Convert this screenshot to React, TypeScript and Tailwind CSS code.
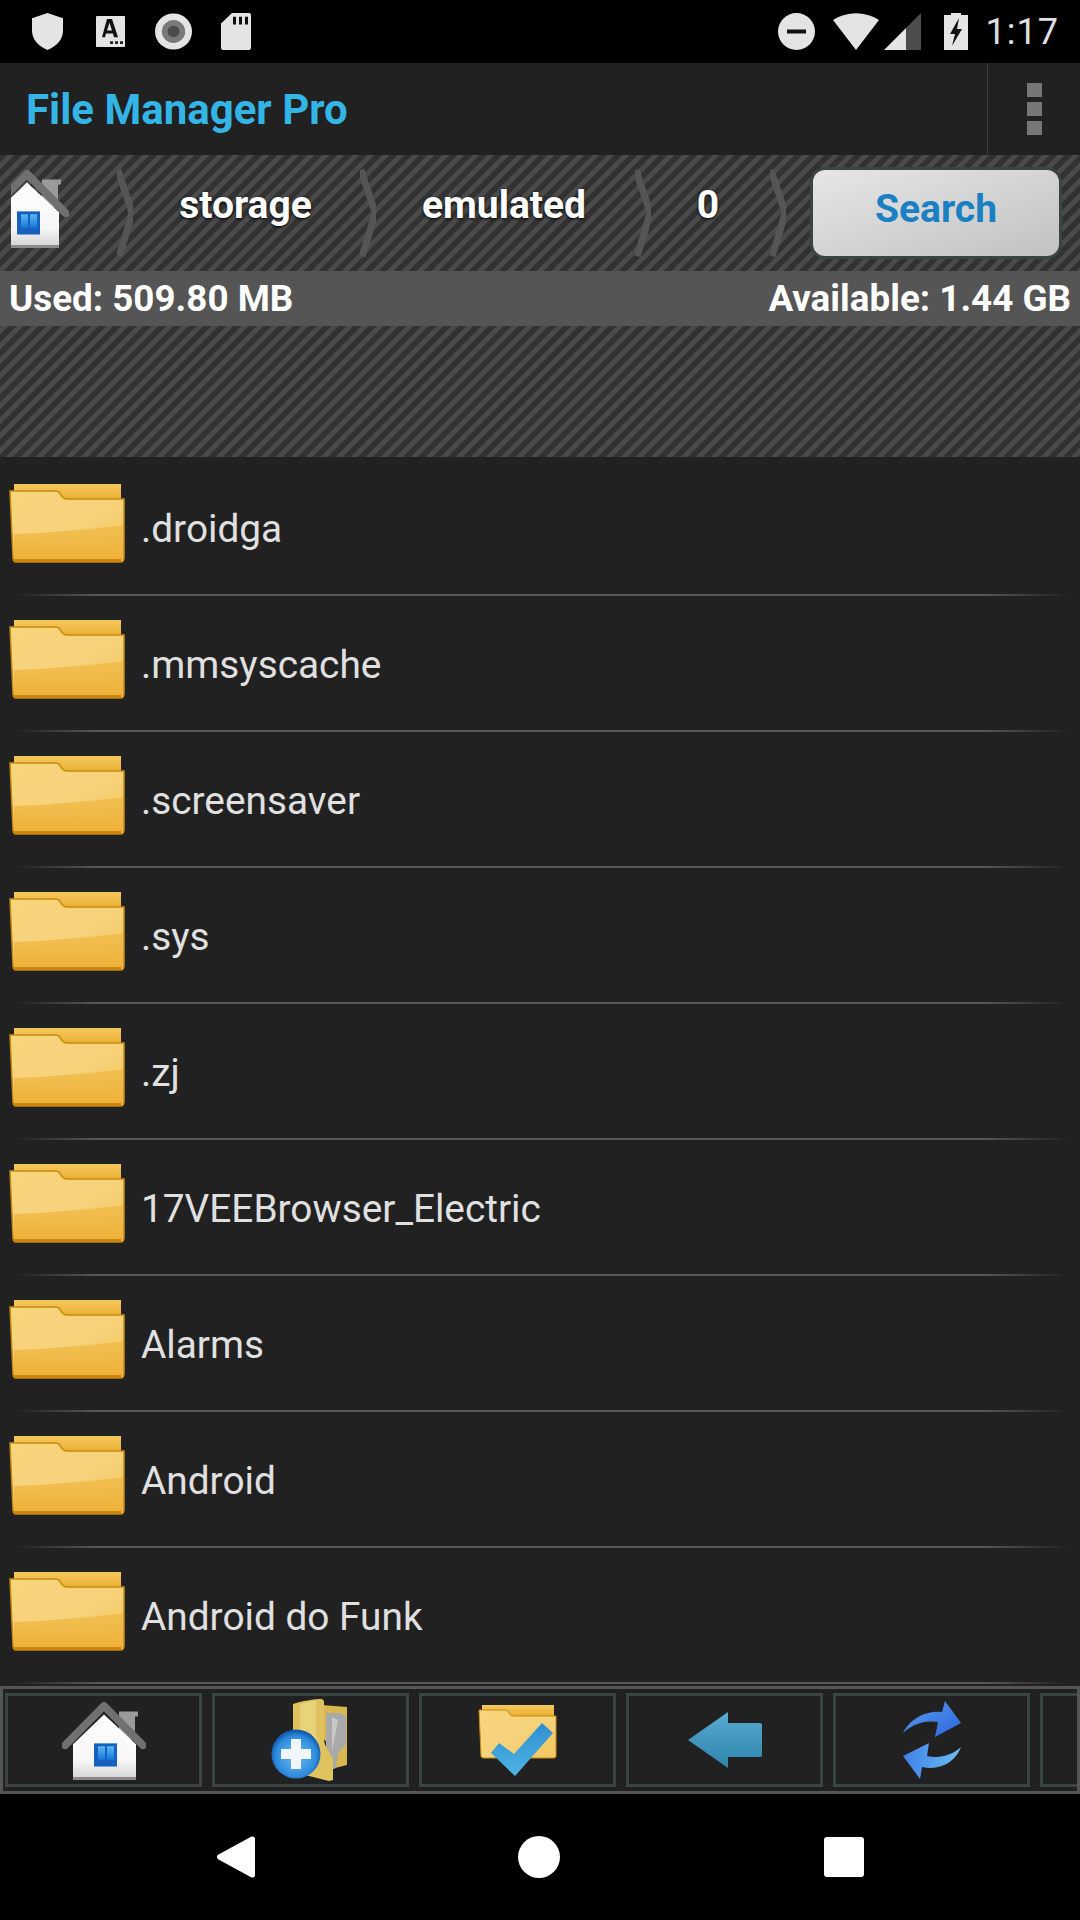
import React from "react"

const folders = [
  ".droidga",
  ".mmsyscache",
  ".screensaver",
  ".sys",
  ".zj",
  "17VEEBrowser_Electric",
  "Alarms",
  "Android",
  "Android do Funk",
]

const stripes =
  "bg-[repeating-linear-gradient(135deg,#323232_0px,#323232_5.6px,#4a4a4a_5.6px,#4a4a4a_10.6px)]"

function SharedDefs() {
  return (
    <svg className="absolute w-0 h-0">
      <defs>
        <filter id="soft" x="-5%" y="-5%" width="110%" height="110%">
          <feGaussianBlur stdDeviation="0.7" />
        </filter>
        <linearGradient id="folderFront" x1="0" y1="0" x2="1" y2="1">
          <stop offset="0" stopColor="#f7d57c" />
          <stop offset="0.55" stopColor="#f6d27a" />
          <stop offset="1" stopColor="#f3c65e" />
        </linearGradient>
        <linearGradient id="folderBack" x1="0" y1="0" x2="0" y2="1">
          <stop offset="0" stopColor="#f5c95e" />
          <stop offset="0.25" stopColor="#e9ab2c" />
          <stop offset="1" stopColor="#d79a1e" />
        </linearGradient>
        <linearGradient id="folderSheen" x1="0" y1="0" x2="0" y2="1">
          <stop offset="0" stopColor="#efb943" stopOpacity="0.7" />
          <stop offset="1" stopColor="#eeb03a" stopOpacity="1" />
        </linearGradient>
        <linearGradient id="houseBody" x1="0" y1="0" x2="0" y2="1">
          <stop offset="0" stopColor="#ffffff" />
          <stop offset="0.7" stopColor="#f6f6f6" />
          <stop offset="1" stopColor="#d2d2d2" />
        </linearGradient>
        <linearGradient id="houseWindow" x1="0" y1="0" x2="0" y2="1">
          <stop offset="0" stopColor="#5ab8f0" />
          <stop offset="1" stopColor="#1878d8" />
        </linearGradient>
        <linearGradient id="backArrow" x1="0" y1="0" x2="0" y2="1">
          <stop offset="0" stopColor="#58aad0" />
          <stop offset="1" stopColor="#2e84ab" />
        </linearGradient>
        <linearGradient id="refreshTop" x1="0" y1="0" x2="1" y2="1">
          <stop offset="0" stopColor="#5c9cf0" />
          <stop offset="1" stopColor="#2a66dc" />
        </linearGradient>
        <linearGradient id="refreshBottom" x1="0" y1="0" x2="1" y2="0">
          <stop offset="0" stopColor="#3f7fe8" />
          <stop offset="1" stopColor="#6cc0f4" />
        </linearGradient>
        <linearGradient id="checkFill" x1="0" y1="0" x2="0" y2="1">
          <stop offset="0" stopColor="#2f8fd0" />
          <stop offset="1" stopColor="#4fb4e4" />
        </linearGradient>
        <radialGradient id="plusCircle" cx="0.5" cy="0.55" r="0.55">
          <stop offset="0" stopColor="#6cbcf0" />
          <stop offset="0.75" stopColor="#2f8cdc" />
          <stop offset="1" stopColor="#0c50a8" />
        </radialGradient>
      </defs>
    </svg>
  )
}

function FolderIcon() {
  return (
    <svg width="120" height="84" viewBox="0 0 120 84" className="shrink-0 mb-2">
      <g filter="url(#soft)">
        <path d="M6 2h107v72H6z" fill="url(#folderBack)" />
        <path
          d="M2 9h46c3 0 4 2 5 4 1 2 3 4 6 4h57v58c0 3-1 5-3 5H8c-2 0-3-2-3-5z"
          fill="url(#folderFront)"
          stroke="#c98a10"
          strokeWidth="1.500"
        />
        <path d="M6 52c30-1 70-4 109-9v33c0 2-1 3-3 3H8c-1 0-2-1-2-3z" fill="url(#folderSheen)" />
        <path d="M6 77h107v3H6z" fill="#c98409" />
      </g>
    </svg>
  )
}

function HomeIcon() {
  return (
    <svg width="84" height="80" viewBox="0 0 84 83" preserveAspectRatio="none" className="shrink-0">
      <g filter="url(#soft)">
        <path d="M57 12h19v5h-3v24h-16z" fill="#9a9a9a" />
        <path d="M11 46L42 15l32 31v37H11z" fill="url(#houseBody)" />
        <path d="M11 80h63v3H11z" fill="#8a8a8a" />
        <path d="M3 47L42 6l39 41" fill="none" stroke="#6f6f6f" strokeWidth="8" strokeLinejoin="round" strokeLinecap="round" />
        <path d="M32 45h23v24H32z" fill="#1460c0" />
        <path d="M36 48h7v14h-7zM45 48h7v14h-7z" fill="url(#houseWindow)" />
      </g>
    </svg>
  )
}

function AddFolderIcon() {
  return (
    <svg width="85" height="91" viewBox="268 1694 85 91" className="shrink-0">
      <g filter="url(#soft)">
        <path d="M298 1706l24-3 0 1 25 2v58l-12 3v-15z" fill="#d8b850" />
        <path d="M326 1712h14l6 3v28l-8 10-2 14-10 4z" fill="#a9a9a9" />
        <path d="M332 1716l6 3-6 32z" fill="#c8c8c8" />
        <path d="M293 1703c8-3 22-5 29-5l2 2v38c0 4 2 8 4 11l5 9v21l-4 1-36-9z" fill="#e0c25e" />
        <path d="M300 1703c7-2 12-3 16-3v70l-16-6z" fill="#e8d27a" />
        <circle cx="296" cy="1753" r="24.500" fill="url(#plusCircle)" />
        <path d="M291 1738h10v10h10v10h-10v10h-10v-10h-10v-10h10z" fill="#f2f6fb" />
      </g>
    </svg>
  )
}

function CheckFolderIcon() {
  return (
    <svg width="80" height="82" viewBox="478 1699 80 82" className="shrink-0">
      <g filter="url(#soft)">
        <path d="M482 1705h72v50h-72z" fill="url(#folderBack)" />
        <path
          d="M479 1710h26c3 0 3 2 4 3 1 2 2 3 5 3h42v40c0 1-1 2-2 2h-70c-2 0-3-1-3-2z"
          fill="url(#folderFront)"
          stroke="#c98a10"
          strokeWidth="1"
        />
        <path d="M491 1753l8-10 15 11 28-31 11 10-38 43z" fill="url(#checkFill)" />
      </g>
    </svg>
  )
}

function BackArrowIcon() {
  return (
    <svg width="76" height="58" viewBox="687 1711 76 58" className="shrink-0">
      <path d="M688 1740l40-28v11h32c1 0 2 1 2 2v30c0 1-1 2-2 2h-32v11z" fill="url(#backArrow)" />
    </svg>
  )
}

function RefreshIcon() {
  return (
    <svg width="60" height="80" viewBox="903 1700 60 80" className="shrink-0">
      <path d="M904 1733c6-13 22-23 39-21l3-11 16 22-26 14 3-15c-14-2-25 2-35 11z" fill="url(#refreshTop)" />
      <path d="M962 1747c-5 14-20 24-39 20l-2 12-17-23 26-13-2 13c13 3 25-1 34-9z" fill="url(#refreshBottom)" />
    </svg>
  )
}

function Chevron() {
  return (
    <svg width="24" height="92" viewBox="0 0 24 96" preserveAspectRatio="none" className="shrink-0">
      <path d="M4 3c4 14 10 30 14 45-4 15-8 30-13 45" fill="none" stroke="#555555" strokeWidth="7" filter="url(#soft)" />
    </svg>
  )
}

function StatusBar() {
  return (
    <div className="h-[63px] shrink-0 bg-black flex items-center justify-between pl-[32px] pr-[21px]">
      <div className="flex items-center">
        <svg width="31" height="37" viewBox="0 0 31 39" preserveAspectRatio="none">
          <path d="M15.500 0L31 5.500v13c0 10-7 17-15.500 20.500C7 35.500 0 28.500 0 18.500v-13z" fill="#e4e4e4" />
        </svg>
        <svg width="29" height="31" viewBox="0 0 29 32" preserveAspectRatio="none" className="ml-[33px]">
          <path d="M1 0h27c.6 0 1 .4 1 1v30c0 .6-.4 1-1 1H1c-.6 0-1-.4-1-1V1c0-.6.4-1 1-1z" fill="#e4e4e4" />
          <path d="M11 3h5l6 19h-4l-1-4h-7l-1 4H6zM11 15h5l-2.500-8z" fill="#111111" fillRule="evenodd" />
          <path d="M14 26h3v3h-3zM19 26h3v3h-3zM24 26h3v3h-3z" fill="#222222" />
        </svg>
        <svg width="37" height="37" viewBox="0 0 38 39" preserveAspectRatio="none" className="ml-[30px]">
          <circle cx="19" cy="19.500" r="19" fill="#e4e4e4" />
          <circle cx="19" cy="19.500" r="12" fill="#7a7a7a" />
          <circle cx="19" cy="19.500" r="6" fill="#4a4a4a" />
        </svg>
        <svg width="30" height="37" viewBox="0 0 30 39" preserveAspectRatio="none" className="ml-[29px]">
          <path d="M11 0h17c1 0 2 1 2 2v35c0 1-1 2-2 2H2c-1 0-2-1-2-2V11z" fill="#e4e4e4" />
          <path d="M12 4h3v8h-3zM18 4h3v8h-3zM24 4h3v8h-3z" fill="#111111" />
        </svg>
      </div>
      <div className="flex items-center">
        <svg width="37" height="37" viewBox="0 0 37 37">
          <circle cx="18.500" cy="18.500" r="18.500" fill="#e4e4e4" />
          <path d="M9 16.500h19v4H9z" fill="#111111" />
        </svg>
        <svg width="46" height="37" viewBox="0 0 46 37" className="ml-[18px]">
          <path d="M0 7C14-2 32-2 46 7L23 37z" fill="#e4e4e4" />
        </svg>
        <svg width="37" height="37" viewBox="0 0 37 37" className="ml-[5px]">
          <path d="M37 0v37H22V15z" fill="#4d4d4d" />
          <path d="M22 15v22H0z" fill="#e4e4e4" />
        </svg>
        <svg width="24" height="37" viewBox="0 0 24 37" className="ml-[23px]">
          <path d="M7 0h10v2h7v35H0V2h7z" fill="#e4e4e4" />
          <path d="M15 5L6 21h5l-3 12 10-17h-5z" fill="#111111" />
        </svg>
        <span className="ml-[18px] text-[36px] leading-none text-[#e0e0e0] tracking-[1px]">1:17</span>
      </div>
    </div>
  )
}

function Breadcrumb() {
  return (
    <div className="h-[116px] shrink-0 flex items-center">
      <div className="w-[58px] ml-[11px] h-[80px] overflow-hidden mb-[11px] shrink-0">
        <div className="-ml-[26px] w-[84px]">
          <HomeIcon />
        </div>
      </div>
      <div className="ml-[45px]">
        <Chevron />
      </div>
      <span className="w-[219px] pr-[4px] text-center text-[39px] font-bold text-white [text-shadow:0_1px_3px_#000] mb-[15px] shrink-0">
        storage
      </span>
      <Chevron />
      <span className="w-[251px] pr-[5px] text-center text-[39px] font-bold text-white [text-shadow:0_1px_3px_#000] mb-[15px] shrink-0">
        emulated
      </span>
      <Chevron />
      <span className="w-[111px] pr-[7px] text-center text-[39px] font-bold text-white [text-shadow:0_1px_3px_#000] mb-[15px] shrink-0">
        0
      </span>
      <Chevron />
      <div className="ml-[19px] w-[252px] h-[92px] shrink-0 rounded-[15px] border-[3px] border-[#3a4442] bg-gradient-to-br from-[#e6e6e6] to-[#c2c2c2] flex items-center justify-center pb-[8px] text-[39px] font-bold text-[#1a80c4]">
        Search
      </div>
    </div>
  )
}

function FileRow({ name }: { name: string }) {
  return (
    <div className="relative h-[136px] shrink-0 flex items-center pl-2">
      <FolderIcon />
      <span className="ml-[13px] mt-[2px] text-[38.800px] text-[#e0e0e0] whitespace-nowrap">{name}</span>
      <div className="absolute bottom-0 left-[14px] right-[12px] h-[2px] bg-[linear-gradient(90deg,transparent,#585858_8%,#585858_92%,transparent)]" />
    </div>
  )
}

function ToolButton({ children }: { children?: React.ReactNode }) {
  return (
    <div className="w-[197px] h-[94px] shrink-0 border-[3px] border-[#3a4442] flex items-center justify-center overflow-hidden">
      {children}
    </div>
  )
}

export default function App() {
  return (
    <div className="w-[1080px] h-[1920px] flex flex-col overflow-hidden bg-[#212121] font-[Roboto,sans-serif]">
      <SharedDefs />
      <StatusBar />

      {/* App bar */}
      <div className="h-[92px] shrink-0 flex items-stretch bg-[#212121]">
        <div className="flex-1 flex items-center pl-[26px]">
          <span className="text-[42px] font-bold text-[#33b5e5]">File Manager Pro</span>
        </div>
        <div className="w-[93px] border-l border-[#3c3c3c] flex flex-col justify-center gap-[5px] pl-[39px]">
          <div className="w-[15px] h-[14px] bg-[#777777]" />
          <div className="w-[15px] h-[14px] bg-[#777777]" />
          <div className="w-[15px] h-[14px] bg-[#777777]" />
        </div>
      </div>

      <div className={stripes}>
        <Breadcrumb />
        <div className="h-[55px] flex items-center justify-between bg-[#555555] pl-[9px] pr-[9px] text-[36.800px] font-bold text-white">
          <span>Used: 509.80 MB</span>
          <span>Available: 1.44 GB</span>
        </div>
        <div className="h-[131px]" />
      </div>

      {/* File list */}
      <div className="flex-1 min-h-0 overflow-hidden pt-[3px] flex flex-col">
        {folders.map((name) => (
          <FileRow key={name} name={name} />
        ))}
      </div>

      {/* Bottom toolbar */}
      <div className="h-[108px] shrink-0 border-[3px] border-[#555555] flex items-center gap-[10px] pl-[2px] overflow-hidden bg-[#212121]">
        <ToolButton>
          <HomeIcon />
        </ToolButton>
        <ToolButton>
          <AddFolderIcon />
        </ToolButton>
        <ToolButton>
          <CheckFolderIcon />
        </ToolButton>
        <ToolButton>
          <BackArrowIcon />
        </ToolButton>
        <ToolButton>
          <RefreshIcon />
        </ToolButton>
        <ToolButton />
      </div>

      {/* Navigation bar */}
      <div className="h-[126px] shrink-0 bg-black flex items-center justify-center">
        <div className="w-[647px] flex items-center justify-between">
          <svg width="38" height="42" viewBox="0 0 39 44" preserveAspectRatio="none">
            <path d="M1.500 19.500L35 .8c2-1 4 0 4 2.200v38c0 2.200-2 3.200-4 2.200L1.500 24.500c-2-1.200-2-3.800 0-5z" fill="#ffffff" />
          </svg>
          <div className="w-[42px] h-[42px] rounded-full bg-white" />
          <div className="w-[40px] h-[40px] rounded-[3px] bg-white" />
        </div>
      </div>
    </div>
  )
}
